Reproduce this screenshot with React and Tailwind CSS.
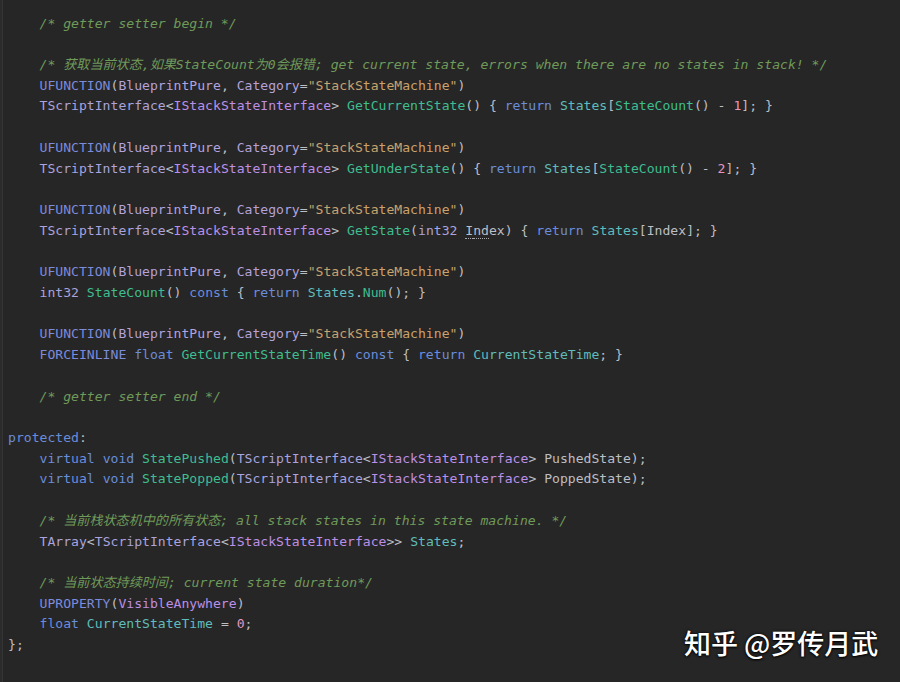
import React from "react";

const cm = "text-[#6f9a5a] italic";
const kw = "text-[#6a8ddb]";
const mac = "text-[#7c8bdb]";
const spec = "text-[#b3a2dc]";
const str = "text-[#c9a26d]";
const num = "text-[#e596c0]";
const fn = "text-[#3fbd90]";
const cls = "text-[#aaa3de]";
const ifc = "text-[#bc8fe6]";
const fld = "text-[#5fbcbc]";
const tx = "text-[#bcbec4]";

const I = [tx, "    "];

const ufn = [
  I,
  [mac, "UFUNCTION"],
  [tx, "("],
  [spec, "BlueprintPure"],
  [tx, ", "],
  [spec, "Category"],
  [tx, "="],
  [str, '"StackStateMachine"'],
  [tx, ")"],
];

const tsi = [
  [cls, "TScriptInterface"],
  [tx, "<"],
  [ifc, "IStackStateInterface"],
  [tx, ">"],
];

const lines = [
  [I, [cm, "/* getter setter begin */"]],
  [],
  [I, [cm, "/* 获取当前状态,如果StateCount为0会报错; get current state, errors when there are no states in stack! */"]],
  ufn,
  [
    I,
    ...tsi,
    [tx, " "],
    [fn, "GetCurrentState"],
    [tx, "() { "],
    [kw, "return"],
    [tx, " "],
    [fld, "States"],
    [tx, "["],
    [fn, "StateCount"],
    [tx, "() - "],
    [num, "1"],
    [tx, "]; }"],
  ],
  [],
  ufn,
  [
    I,
    ...tsi,
    [tx, " "],
    [fn, "GetUnderState"],
    [tx, "() { "],
    [kw, "return"],
    [tx, " "],
    [fld, "States"],
    [tx, "["],
    [fn, "StateCount"],
    [tx, "() - "],
    [num, "2"],
    [tx, "]; }"],
  ],
  [],
  ufn,
  [
    I,
    ...tsi,
    [tx, " "],
    [fn, "GetState"],
    [tx, "("],
    [cls, "int32"],
    [tx, " "],
    ["idx", "Index"],
    [tx, ") { "],
    [kw, "return"],
    [tx, " "],
    [fld, "States"],
    [tx, "[Index]; }"],
  ],
  [],
  ufn,
  [
    I,
    [cls, "int32"],
    [tx, " "],
    [fn, "StateCount"],
    [tx, "() "],
    [kw, "const"],
    [tx, " { "],
    [kw, "return"],
    [tx, " "],
    [fld, "States"],
    [tx, "."],
    [fn, "Num"],
    [tx, "(); }"],
  ],
  [],
  ufn,
  [
    I,
    [mac, "FORCEINLINE"],
    [tx, " "],
    [kw, "float"],
    [tx, " "],
    [fn, "GetCurrentStateTime"],
    [tx, "() "],
    [kw, "const"],
    [tx, " { "],
    [kw, "return"],
    [tx, " "],
    [fld, "CurrentStateTime"],
    [tx, "; }"],
  ],
  [],
  [I, [cm, "/* getter setter end */"]],
  [],
  [
    [kw, "protected"],
    [tx, ":"],
  ],
  [
    I,
    [kw, "virtual"],
    [tx, " "],
    [kw, "void"],
    [tx, " "],
    [fn, "StatePushed"],
    [tx, "("],
    ...tsi,
    [tx, " PushedState);"],
  ],
  [
    I,
    [kw, "virtual"],
    [tx, " "],
    [kw, "void"],
    [tx, " "],
    [fn, "StatePopped"],
    [tx, "("],
    ...tsi,
    [tx, " PoppedState);"],
  ],
  [],
  [I, [cm, "/* 当前栈状态机中的所有状态; all stack states in this state machine. */"]],
  [
    I,
    [cls, "TArray"],
    [tx, "<"],
    ...tsi,
    [tx, "> "],
    [fld, "States"],
    [tx, ";"],
  ],
  [],
  [I, [cm, "/* 当前状态持续时间; current state duration*/"]],
  [
    I,
    [mac, "UPROPERTY"],
    [tx, "("],
    [ifc, "VisibleAnywhere"],
    [tx, ")"],
  ],
  [
    I,
    [kw, "float"],
    [tx, " "],
    [fld, "CurrentStateTime"],
    [tx, " = "],
    [num, "0"],
    [tx, ";"],
  ],
  [[tx, "};"]],
];

function Token({ c, t }) {
  if (c === "idx") {
    return (
      <span className="text-[#bcbec4]">
        <span className="border-b border-dotted border-[#a8a8a8]">I</span>
        <span className="border-b border-dotted border-[#a8a8a8]">nd</span>
        ex
      </span>
    );
  }
  return <span className={c}>{t}</span>;
}

export default function App() {
  return (
    <div className="relative w-[900px] h-[682px] overflow-hidden bg-[#262626] flex">
      <div className="w-[3px] h-full bg-[#2b2b2b] border-r border-[#343434]" />
      <div
        className="flex-1 pt-[13.6px] pl-[5px] flex flex-col text-[13.1px] leading-[20.72px] whitespace-pre"
        style={{ fontFamily: '"DejaVu Sans Mono", "Noto Sans CJK SC", monospace' }}
      >
        {lines.map((ln, i) => (
          <div key={i} className="h-[20.72px]">
            {ln.map(([c, t], j) => (
              <Token key={j} c={c} t={t} />
            ))}
          </div>
        ))}
      </div>
      <div
        className="absolute left-[684px] top-[626px] text-[27px] leading-[34px] font-medium text-white [text-shadow:0_0_3px_rgba(0,0,0,0.95),0_1px_2px_rgba(0,0,0,0.9)]"
        style={{ fontFamily: '"Noto Sans CJK SC", "Noto Sans", sans-serif' }}
      >
        知乎 @罗传月武
      </div>
    </div>
  );
}
